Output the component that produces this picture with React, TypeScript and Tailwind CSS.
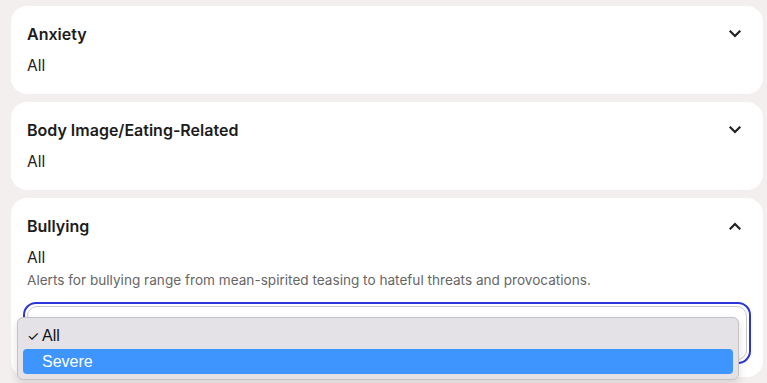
import React from "react";

function Chevron({ up }: { up?: boolean }) {
  return (
    <svg width="12" height="8" viewBox="0 0 12 8" className="block">
      <polyline
        points={up ? "1.5,6.5 6,2 10.5,6.5" : "1.5,1.5 6,6 10.5,1.5"}
        fill="none"
        stroke="#222222"
        strokeWidth="2.2"
        strokeLinecap="square"
      />
    </svg>
  );
}

function Card({ title, value, children, up }: { title: string; value: string; children?: React.ReactNode; up?: boolean }) {
  return (
    <div className="bg-white rounded-2xl pl-4 pr-[22px] pt-4 pb-4">
      <div className="flex items-center justify-between h-6">
        <div className="text-[16px] leading-6 font-semibold text-[#1c1c1c]">{title}</div>
        <Chevron up={up} />
      </div>
      <div className="mt-2 text-[15.5px] leading-6 text-[#222222]">{value}</div>
      {children}
    </div>
  );
}

export default function App() {
  return (
    <div
      className="w-[767px] h-[383px] overflow-hidden bg-[#f3efee] pl-[11px] pr-1 pt-[6px]"
      style={{ fontFamily: "Inter, 'Noto Sans', sans-serif" }}
    >
      <div className="flex flex-col gap-2">
        <Card title="Anxiety" value="All" />
        <Card title="Body Image/Eating-Related" value="All" />
        <div className="bg-white rounded-2xl pl-4 pr-[22px] pt-4 pb-[13px]">
          <div className="flex items-center justify-between h-6">
            <div className="text-[16px] leading-6 font-semibold text-[#1c1c1c]">Bullying</div>
            <Chevron up />
          </div>
          <div className="mt-2 text-[15.5px] leading-6 text-[#222222]">All</div>
          <div className="text-[13.6px] leading-5 text-[#666666]">
            Alerts for bullying range from mean-spirited teasing to hateful threats and provocations.
          </div>
          <div className="relative mt-3 ml-[-4px] mr-[-10px]">
            <div className="h-[62px] rounded-[13px] border-2 border-[#2b35d8] p-[2px]">
              <div className="h-full rounded-[10px] border border-[#c9c9c9]" />
            </div>
            <div
              className="absolute left-[-6px] top-[15px] w-[722px] h-[63px] rounded-[6px] bg-[#e4e2e7] border border-[#c3c3c3] shadow-[0_4px_10px_rgba(0,0,0,0.12)] px-[5px] pt-[5px]"
              style={{ fontFamily: "'Liberation Sans', Inter, sans-serif" }}
            >
              <div className="h-[26px] flex items-center text-[16px] text-[#111111]">
                <span className="w-[19px] pl-[4px] text-[14px]">✓</span>
                <span>All</span>
              </div>
              <div className="h-[25px] rounded-[4px] bg-[#3d95fd] flex items-center text-[16px] text-white">
                <span className="w-[19px]" />
                <span className="font-medium">Severe</span>
              </div>
            </div>
          </div>
        </div>
      </div>
    </div>
  );
}
